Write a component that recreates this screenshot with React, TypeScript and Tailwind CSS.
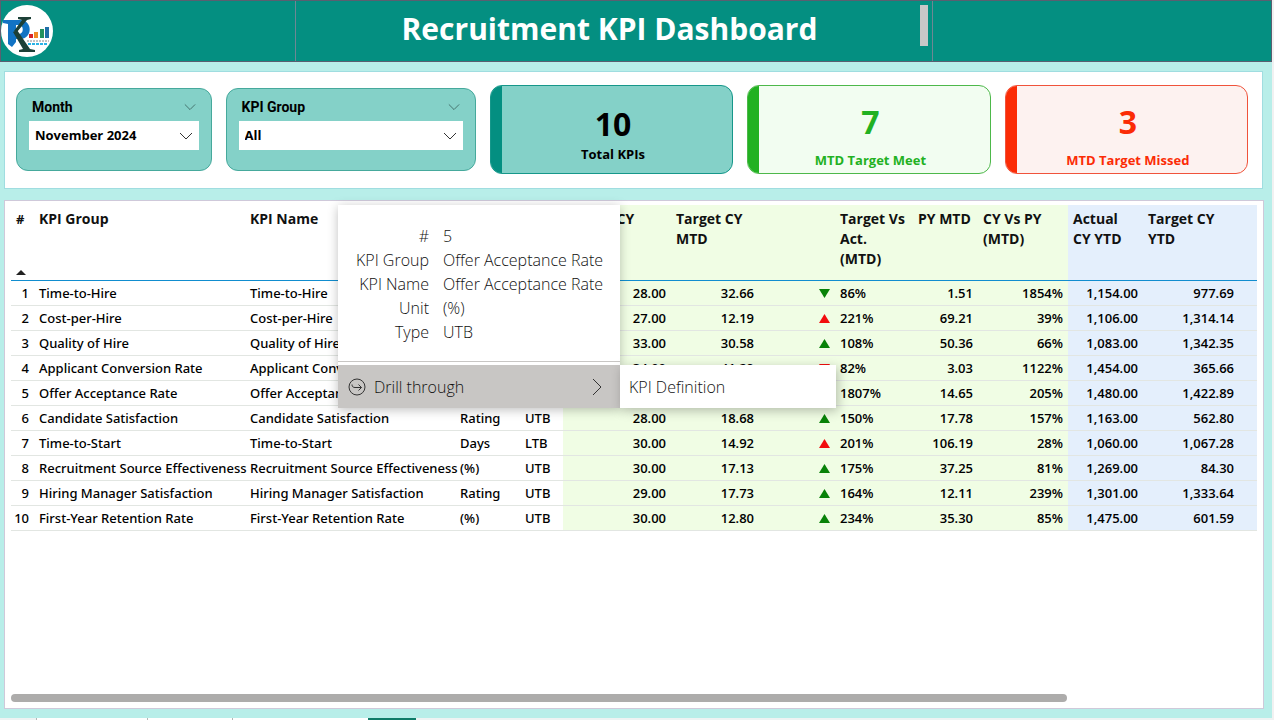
import { useState } from 'react';
import type { ReactNode } from 'react';
import clsx from 'clsx';

type Arrow = 'up-green' | 'down-green' | 'up-red' | 'down-red';

interface KpiRow {
  id: number;
  name: string;
  unit: string;
  type: string;
  actualMtd: string;
  targetMtd: string;
  arrow: Arrow;
  targetVsActual: string;
  pyMtd: string;
  cyVsPy: string;
  actualYtd: string;
  targetYtd: string;
}

const rows: KpiRow[] = [
  { id: 1, name: 'Time-to-Hire', unit: 'Days', type: 'LTB', actualMtd: '28.00', targetMtd: '32.66', arrow: 'down-green', targetVsActual: '86%', pyMtd: '1.51', cyVsPy: '1854%', actualYtd: '1,154.00', targetYtd: '977.69' },
  { id: 2, name: 'Cost-per-Hire', unit: 'USD', type: 'LTB', actualMtd: '27.00', targetMtd: '12.19', arrow: 'up-red', targetVsActual: '221%', pyMtd: '69.21', cyVsPy: '39%', actualYtd: '1,106.00', targetYtd: '1,314.14' },
  { id: 3, name: 'Quality of Hire', unit: 'Rating', type: 'UTB', actualMtd: '33.00', targetMtd: '30.58', arrow: 'up-green', targetVsActual: '108%', pyMtd: '50.36', cyVsPy: '66%', actualYtd: '1,083.00', targetYtd: '1,342.35' },
  { id: 4, name: 'Applicant Conversion Rate', unit: '(%)', type: 'UTB', actualMtd: '34.00', targetMtd: '41.29', arrow: 'down-red', targetVsActual: '82%', pyMtd: '3.03', cyVsPy: '1122%', actualYtd: '1,454.00', targetYtd: '365.66' },
  { id: 5, name: 'Offer Acceptance Rate', unit: '(%)', type: 'UTB', actualMtd: '30.00', targetMtd: '1.66', arrow: 'up-green', targetVsActual: '1807%', pyMtd: '14.65', cyVsPy: '205%', actualYtd: '1,480.00', targetYtd: '1,422.89' },
  { id: 6, name: 'Candidate Satisfaction', unit: 'Rating', type: 'UTB', actualMtd: '28.00', targetMtd: '18.68', arrow: 'up-green', targetVsActual: '150%', pyMtd: '17.78', cyVsPy: '157%', actualYtd: '1,163.00', targetYtd: '562.80' },
  { id: 7, name: 'Time-to-Start', unit: 'Days', type: 'LTB', actualMtd: '30.00', targetMtd: '14.92', arrow: 'up-red', targetVsActual: '201%', pyMtd: '106.19', cyVsPy: '28%', actualYtd: '1,060.00', targetYtd: '1,067.28' },
  { id: 8, name: 'Recruitment Source Effectiveness', unit: '(%)', type: 'UTB', actualMtd: '30.00', targetMtd: '17.13', arrow: 'up-green', targetVsActual: '175%', pyMtd: '37.25', cyVsPy: '81%', actualYtd: '1,269.00', targetYtd: '84.30' },
  { id: 9, name: 'Hiring Manager Satisfaction', unit: 'Rating', type: 'UTB', actualMtd: '29.00', targetMtd: '17.73', arrow: 'up-green', targetVsActual: '164%', pyMtd: '12.11', cyVsPy: '239%', actualYtd: '1,301.00', targetYtd: '1,333.64' },
  { id: 10, name: 'First-Year Retention Rate', unit: '(%)', type: 'UTB', actualMtd: '30.00', targetMtd: '12.80', arrow: 'up-green', targetVsActual: '234%', pyMtd: '35.30', cyVsPy: '85%', actualYtd: '1,475.00', targetYtd: '601.59' },
];

const details = [
  ['#', '5'],
  ['KPI Group', 'Offer Acceptance Rate'],
  ['KPI Name', 'Offer Acceptance Rate'],
  ['Unit', '(%)'],
  ['Type', 'UTB'],
];

const Chevron = ({ className }: { className?: string }) => (
  <svg viewBox="0 0 14 8" fill="none" stroke="currentColor" className={className} aria-hidden="true">
    <path d="M1 1l6 6 6-6" />
  </svg>
);

const Logo = () => (
  <svg viewBox="0 0 52 52" className="size-[52px] shrink-0" role="img" aria-label="PK logo">
    <circle cx="26" cy="26" r="26" fill="#fff" />
    <path
      fill="#1273c4"
      fillRule="evenodd"
      d="M2 15h17c13 0 13 19 0 19h-4v3l-4 5-4-3V19l-5-1zM15 20v9h3c5 0 5-9 0-9z"
    />
    <g fill="#1d4037">
      <path d="M17 12h13v2l-4 1-10 12-3-1 8-11-4-1z" />
      <path d="M12 27l4-2 13 19 5 1v2H18v-2l4-1z" />
    </g>
    <rect x="28" y="29" width="4" height="4" fill="#d8232a" />
    <rect x="33" y="27" width="4" height="6" fill="#f08a24" />
    <rect x="39" y="24" width="4" height="9" fill="#22915f" />
    <rect x="44" y="22" width="4" height="11" fill="#1f6fa8" />
    <path d="M26 36h22" stroke="#888" strokeDasharray="2 1" />
    <path d="M27 39h20" stroke="#2bb3e6" strokeWidth="2" strokeDasharray="3 1" />
  </svg>
);

interface SlicerProps {
  id: string;
  label: string;
  options: string[];
}

const Slicer = ({ id, label, options }: SlicerProps) => (
  <div className="my-[3px] rounded-xl border border-[#46a99c] bg-[#84d1c8] px-3 pt-2">
    <div className="flex items-center justify-between px-[3px]">
      <label htmlFor={id} className="font-[Roboto] text-sm leading-5 font-bold">
        {label}
      </label>
      <Chevron className="h-2 w-3 text-[#3c6661]" />
    </div>
    <div className="relative mt-1">
      <select
        id={id}
        className="block h-[29px] w-full appearance-none bg-white pl-[6px] text-[13px] font-bold text-black"
      >
        {options.map((option) => (
          <option key={option}>{option}</option>
        ))}
      </select>
      <Chevron className="pointer-events-none absolute top-[11px] right-[6px] h-2 w-[14px] text-[#333]" />
    </div>
  </div>
);

interface StatCardProps {
  value: string;
  label: string;
  className: string;
  barClassName: string;
  bodyClassName: string;
}

const StatCard = ({ value, label, className, barClassName, bodyClassName }: StatCardProps) => (
  <div className={clsx('flex h-[89px] overflow-hidden rounded-xl border', className)}>
    <div className={clsx('w-[11px] shrink-0', barClassName)} />
    <div className={clsx('flex flex-1 flex-col items-center pr-2 font-bold', bodyClassName)}>
      <span className="text-[32px] leading-10">{value}</span>
      <span className="text-[13px] leading-5">{label}</span>
    </div>
  </div>
);

const ArrowMark = ({ arrow }: { arrow: Arrow }) => (
  <svg
    viewBox="0 0 10 9"
    className={clsx(
      'ml-auto h-[9px] w-[11px]',
      arrow.endsWith('green') ? 'text-[#088208]' : 'text-[#f20d0d]',
      arrow.startsWith('down') && 'rotate-180'
    )}
    preserveAspectRatio="none"
    role="img"
    aria-label={arrow.startsWith('down') ? 'down' : 'up'}
  >
    <path d="M5 0l5 9H0z" fill="currentColor" />
  </svg>
);

const Th = ({ children, className }: { children?: ReactNode; className?: string }) => (
  <th scope="col" className={clsx('h-[76px] border-b border-b-[#118dcf] px-[5px] pt-1 text-left align-top leading-5 font-bold', className)}>
    {children}
  </th>
);

const Td = ({ children, className }: { children?: ReactNode; className?: string }) => (
  <td className={clsx('h-[25px] border-b border-b-[#e2e6e2] px-[5px] leading-5 whitespace-nowrap', className)}>{children}</td>
);

const KpiTable = () => (
  <table className="w-full table-fixed border-separate border-spacing-0 text-[13px] font-semibold text-black">
    <colgroup>
      <col className="w-[23px]" />
      <col className="w-[211px]" />
      <col className="w-[210px]" />
      <col className="w-[65px]" />
      <col className="w-[43px]" />
      <col className="w-[108px]" />
      <col className="w-[88px]" />
      <col className="w-[76px]" />
      <col className="w-[78px]" />
      <col className="w-[65px]" />
      <col className="w-[90px]" />
      <col className="w-[75px]" />
      <col className="w-[96px]" />
      <col />
    </colgroup>
    <thead className="text-sm text-[#111]">
      <tr>
        <Th>
          <span className="flex h-[66px] flex-col justify-between text-[13px]">
            #
            <svg viewBox="0 0 10 5" className="h-[5px] w-[10px]" aria-hidden="true">
              <path d="M5 0l5 5H0z" fill="#222" />
            </svg>
          </span>
        </Th>
        <Th>KPI Group</Th>
        <Th>KPI Name</Th>
        <Th>Unit</Th>
        <Th>Type</Th>
        <Th className="bg-[#f0fde4]">Actual CY<br />MTD</Th>
        <Th className="bg-[#f0fde4]">Target CY<br />MTD</Th>
        <Th className="bg-[#f0fde4]" />
        <Th className="bg-[#f0fde4] whitespace-nowrap">Target Vs<br />Act.<br />(MTD)</Th>
        <Th className="bg-[#f0fde4] whitespace-nowrap">PY MTD</Th>
        <Th className="bg-[#f0fde4]">CY Vs PY<br />(MTD)</Th>
        <Th className="bg-[#e4effc]">Actual<br />CY YTD</Th>
        <Th className="bg-[#e4effc]">Target CY<br />YTD</Th>
        <Th className="bg-[#e4effc]" />
      </tr>
    </thead>
    <tbody>
      {rows.map((row) => (
        <tr key={row.id}>
          <Td className="pl-0 text-right font-['Noto_Sans'] font-medium">{row.id}</Td>
          <Td className="font-['Noto_Sans'] font-medium">{row.name}</Td>
          <Td className="font-['Noto_Sans'] font-medium">{row.name}</Td>
          <Td className="font-['Noto_Sans'] font-medium">{row.unit}</Td>
          <Td className="font-['Noto_Sans'] font-medium">{row.type}</Td>
          <Td className="bg-[#f0fde4] text-right">{row.actualMtd}</Td>
          <Td className="bg-[#f0fde4] text-right">{row.targetMtd}</Td>
          <Td className="bg-[#f0fde4]">
            <ArrowMark arrow={row.arrow} />
          </Td>
          <Td className="bg-[#f0fde4]">{row.targetVsActual}</Td>
          <Td className="bg-[#f0fde4] text-right">{row.pyMtd}</Td>
          <Td className="bg-[#f0fde4] text-right">{row.cyVsPy}</Td>
          <Td className="bg-[#e4effc] text-right">{row.actualYtd}</Td>
          <Td className="bg-[#e4effc] text-right">{row.targetYtd}</Td>
          <Td className="bg-[#e4effc]" />
        </tr>
      ))}
    </tbody>
  </table>
);

const ContextMenu = () => {
  const [open, setOpen] = useState(true);

  return (
    <div className="absolute top-1 left-[333px] flex items-end text-base font-light text-[#111]">
      <div className="w-[282px] bg-white shadow-[0_2px_10px_rgba(0,0,0,0.25)]">
        <dl className="grid grid-cols-[91px_1fr] gap-x-[14px] pt-[19px] pb-[17px]">
          {details.map(([label, value]) => (
            <div key={label} className="contents">
              <dt className="text-right leading-6">{label}</dt>
              <dd className="leading-6">{value}</dd>
            </div>
          ))}
        </dl>
        <div className="border-t border-[#c8c6c4] pt-[3px]">
          <button
            type="button"
            aria-expanded={open}
            onClick={() => setOpen(!open)}
            className="flex h-[43px] w-full items-center bg-[#c8c6c4] px-[10px]"
          >
            <svg viewBox="0 0 18 18" fill="none" stroke="#333" className="size-[18px]" aria-hidden="true">
              <circle cx="9" cy="9" r="8" />
              <path d="M4 6.500c0 2 1 3 3 3h6.500M10.500 6.500l3 3-3 3" />
            </svg>
            <span className="ml-2">Drill through</span>
            <svg viewBox="0 0 10 18" fill="none" stroke="#333" className="mr-2 ml-auto h-[18px] w-[10px]" aria-hidden="true">
              <path d="M1 1l8 8-8 8" />
            </svg>
          </button>
        </div>
      </div>
      {open && (
        <button
          type="button"
          className="h-[43px] w-[216px] bg-white px-[9px] text-left shadow-[2px_3px_10px_rgba(0,0,0,0.25)]"
        >
          KPI Definition
        </button>
      )}
    </div>
  );
};

const App = () => (
  <div className="flex min-h-screen flex-col border-r-2 border-[#f1f1f1] bg-[#b8eee9] font-['Open_Sans','Noto_Sans',sans-serif] text-black">
    <header className="grid h-[62px] grid-cols-[294fr_639fr_339fr] border border-[#5a5f70] bg-[#048f81]">
      <div className="flex items-center">
        <Logo />
      </div>
      <div className="flex justify-between border-x border-[#6f8794] pt-1 pr-1">
        <h1 className="flex-1 pl-1 text-center text-[30px] leading-[48px] font-bold text-white">
          Recruitment KPI Dashboard
        </h1>
        <div className="h-[41px] w-2 bg-[#c8c8c8]" />
      </div>
    </header>

    <section className="mt-[9px] mr-[9px] ml-1 grid grid-cols-[196fr_251fr_244fr_244fr_244fr] gap-[14px] border border-[#a0dde0] bg-white pt-[13px] pr-[14px] pb-[14px] pl-[11px]">
      <Slicer id="month" label="Month" options={['November 2024']} />
      <Slicer id="kpi-group" label="KPI Group" options={['All']} />
      <StatCard
        value="10"
        label="Total KPIs"
        className="border-[#16978a] bg-[#84d1c8]"
        barClassName="bg-[#048f81]"
        bodyClassName="pt-[18px]"
      />
      <StatCard
        value="7"
        label="MTD Target Meet"
        className="border-[#4db84a] bg-[#f2fdf1] text-[#22b122]"
        barClassName="bg-[#22b122]"
        bodyClassName="pt-4 gap-2"
      />
      <StatCard
        value="3"
        label="MTD Target Missed"
        className="border-[#f0533b] bg-[#fdf2f0] text-[#fb2c06]"
        barClassName="bg-[#fb2c06]"
        bodyClassName="pt-4 gap-2"
      />
    </section>

    <main className="relative mt-[11px] mr-2 ml-1 flex flex-1 flex-col border border-[#cfc9da] bg-white px-[6px] pt-1 pb-[6px]">
      <KpiTable />
      <div className="mt-auto mr-[190px] h-2 rounded-full bg-[#adacab]" />
      <ContextMenu />
    </main>

    <footer className="mt-[9px] flex h-[2px] bg-[#eef3f3]">
      <div className="ml-9 w-[111px] border-l border-[#b5b5b5] bg-white" />
      <div className="w-[85px] border-l border-[#b5b5b5] bg-white" />
      <div className="w-[136px] border-l border-[#b5b5b5] bg-white" />
      <div className="w-12 bg-[#0f7b68]" />
    </footer>
  </div>
);

export default App;
